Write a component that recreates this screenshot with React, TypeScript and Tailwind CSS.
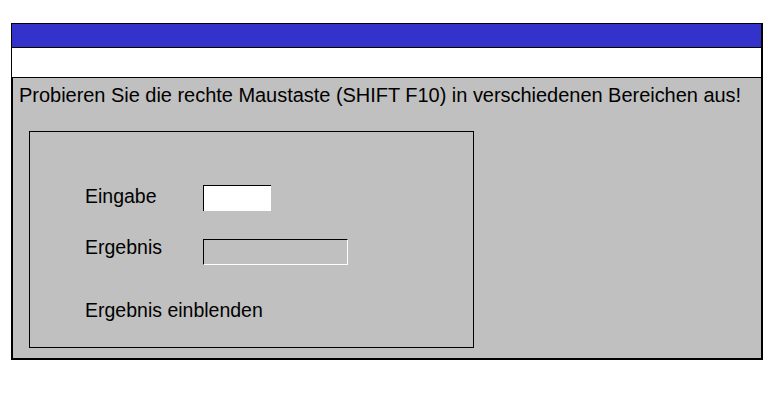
import React from "react";

export default function App() {
  return (
    <div className="w-[780px] h-[396px] bg-white pt-[23px] pl-[11px]" style={{ fontFamily: '"Liberation Sans", Arial, sans-serif' }}>
      <div className="w-[752px] h-[337px] flex flex-col border-t border-l border-r-2 border-b-2 border-black">
        <div className="h-[24px] bg-[#3333cc] border-b border-black shrink-0" />
        <div className="h-[30px] bg-white border-b border-black shrink-0" />
        <div className="flex-1 bg-[#c0c0c0] border-l border-black text-black">
          <div className="pl-[6px] pt-[5px] h-[29px] text-[20px] leading-[24px] whitespace-nowrap tracking-[-0.03px]">
            Probieren Sie die rechte Maustaste (SHIFT F10) in verschiedenen Bereichen aus!
          </div>
          <div className="ml-[16px] mt-[24px] w-[445px] h-[217px] border border-black pt-[53px] pl-[55px] text-[19.5px] leading-[24px]">
            <div className="flex items-start h-[26px]">
              <span className="w-[118px] h-[24px] mt-[-1px]">Eingabe</span>
              <div className="w-[68px] h-[26px] bg-white border-t border-l border-black" />
            </div>
            <div className="flex items-start h-[26px] mt-[28px]">
              <span className="w-[118px] h-[24px] mt-[-4px]">Ergebnis</span>
              <div className="w-[145px] h-[26px] bg-[#c0c0c0] border-t border-l border-black border-r border-b border-r-white border-b-white" />
            </div>
            <div className="mt-[33px] h-[24px]">Ergebnis einblenden</div>
          </div>
        </div>
      </div>
    </div>
  );
}
